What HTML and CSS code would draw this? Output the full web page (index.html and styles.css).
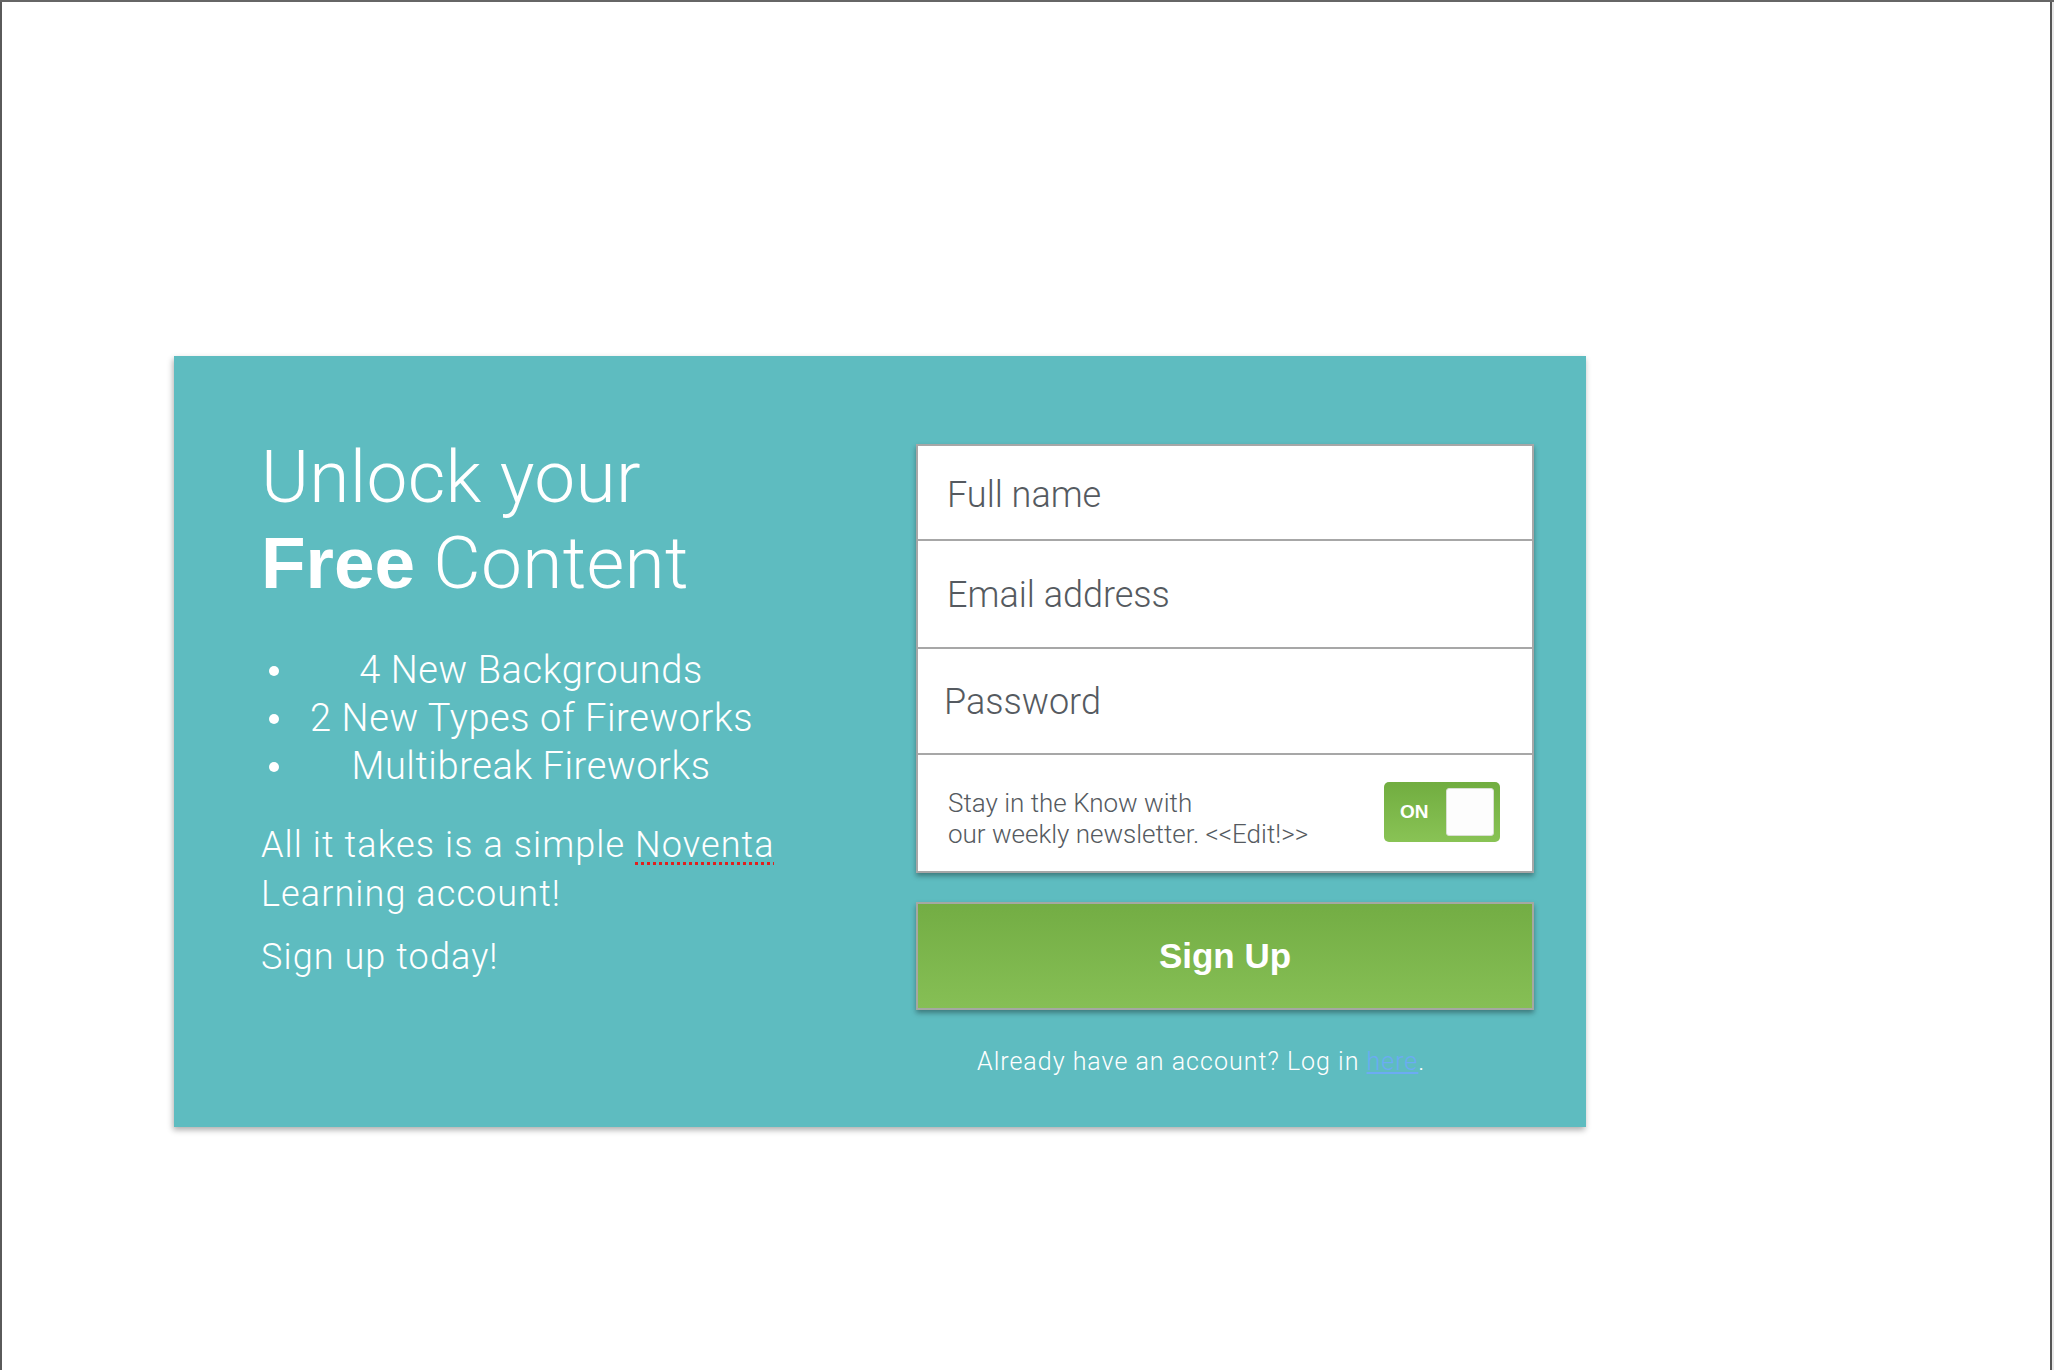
FILE: index.html
```html
<!DOCTYPE html>
<html lang="en">
<head>
<meta charset="utf-8">
<title>Unlock your Free Content</title>
<link rel="stylesheet" href="styles.css">
</head>
<body>
<div class="frame">
  <section class="card">
    <div class="pitch">
      <h1 class="pitch-title">Unlock your<br><strong>Free</strong> Content</h1>
      <ul class="perks">
        <li class="perk"><span class="perk-dot"></span><span class="perk-text">4 New Backgrounds</span></li>
        <li class="perk"><span class="perk-dot"></span><span class="perk-text">2 New Types of Fireworks</span></li>
        <li class="perk"><span class="perk-dot"></span><span class="perk-text">Multibreak Fireworks</span></li>
      </ul>
      <p class="pitch-copy">All it takes is a simple <span class="misspelled">Noventa</span> Learning account!</p>
      <p class="pitch-cta">Sign up today!</p>
    </div>
    <div class="signup">
      <div class="fields">
        <div class="field field-name">Full name</div>
        <div class="field field-email">Email address</div>
        <div class="field field-password">Password</div>
        <div class="field field-news">
          <p class="news-text">Stay in the Know with<br>our weekly newsletter. &lt;&lt;Edit!&gt;&gt;</p>
          <div class="toggle">
            <span class="toggle-label">ON</span>
            <span class="toggle-knob"></span>
          </div>
        </div>
      </div>
      <button class="signup-btn" type="button">Sign Up</button>
      <p class="login-note">Already have an account? Log in <a class="login-link" href="#">here</a>.</p>
    </div>
  </section>
</div>
</body>
</html>
```

FILE: styles.css
```css
html {
  background: #e6e6e6;
}

body {
  margin: 0;
  border-top: 2px solid #666666;
  font-family: Roboto, "Liberation Sans", Arial, sans-serif;
  font-weight: 300;
}

.frame {
  width: 2052px;
  height: 1368px;
  box-sizing: border-box;
  background: #ffffff;
  border-left: 2px solid #5a5a5a;
  border-right: 2px solid #555555;
  padding: 354px 0 0 172px;
}

.card {
  width: 1412px;
  height: 771px;
  box-sizing: border-box;
  background: #5ebcc0;
  box-shadow: -1px 3px 6px rgba(0, 0, 0, 0.32);
  display: grid;
  grid-template-columns: 1fr 618px;
  align-items: start;
  padding: 0 52px 0 87px;
  color: #ffffff;
}

/* left column */
.pitch {
  padding-top: 78px;
}

.pitch-title {
  margin: 0;
  font-size: 73px;
  line-height: 86px;
  font-weight: 300;
  letter-spacing: 0.3px;
}

.pitch-title strong {
  font-family: "Liberation Sans", Arial, sans-serif;
  font-weight: 700;
  letter-spacing: 0;
}

.perks {
  list-style: none;
  margin: 40px 0 0 0;
  padding: 0;
  font-size: 38px;
  line-height: 48px;
  letter-spacing: 0.6px;
}

.perk {
  display: grid;
  grid-template-columns: 49px 442px;
  align-items: start;
}

.perk-dot {
  width: 10px;
  height: 10px;
  margin: 20px 0 0 8px;
  border-radius: 50%;
  background: #ffffff;
}

.perk-text {
  text-align: center;
  white-space: nowrap;
}

.pitch-copy {
  margin: 31px 0 0 0;
  font-size: 36px;
  line-height: 49px;
  letter-spacing: 1.1px;
  max-width: 560px;
}

.misspelled {
  text-decoration: underline dotted #e0201e;
  text-decoration-thickness: 3px;
  text-underline-offset: 5px;
}

.pitch-cta {
  margin: 14px 0 0 0;
  font-size: 36px;
  line-height: 49px;
  letter-spacing: 1.1px;
}

/* right column */
.signup {
  padding-top: 88px;
}

.fields {
  background: #ffffff;
  border: 2px solid #a7a7a7;
  box-shadow: 0 3px 5px rgba(0, 0, 0, 0.35);
  color: #555a60;
}

.field {
  box-sizing: border-box;
  padding-left: 29px;
  font-size: 36px;
  line-height: 42px;
  border-bottom: 2px solid #a7a7a7;
}

.field-name {
  height: 95px;
  padding-top: 28px;
}

.field-email {
  height: 108px;
  padding-top: 33px;
}

.field-password {
  height: 106px;
  padding-top: 32px;
  padding-left: 26px;
}

.field-news {
  height: 116px;
  border-bottom: 0;
  display: flex;
  justify-content: space-between;
  align-items: flex-start;
  padding-left: 30px;
  padding-right: 32px;
}

.news-text {
  margin: 0;
  padding-top: 33px;
  font-size: 26px;
  line-height: 31px;
}

.toggle {
  margin-top: 27px;
  width: 116px;
  height: 60px;
  box-sizing: border-box;
  border-radius: 5px;
  background: linear-gradient(#71ad40, #89c355);
  display: flex;
  align-items: center;
  justify-content: space-between;
  padding: 0 6px 0 16px;
}

.toggle-label {
  font-family: "Liberation Sans", Arial, sans-serif;
  font-weight: 700;
  font-size: 19px;
  color: #ffffff;
}

.toggle-knob {
  width: 48px;
  height: 48px;
  box-sizing: border-box;
  background: #fdfdfd;
  border: 1px solid #d9dfd3;
  border-radius: 3px;
}

.signup-btn {
  display: block;
  width: 100%;
  height: 108px;
  margin-top: 29px;
  border: 2px solid #a5a8a2;
  background: linear-gradient(#73ad44, #86bf55);
  box-shadow: 0 3px 5px rgba(0, 0, 0, 0.35);
  color: #ffffff;
  font-family: "Liberation Sans", Arial, sans-serif;
  font-weight: 700;
  font-size: 35px;
  padding: 0;
  cursor: pointer;
}

.login-note {
  margin: 37px 0 0 0;
  padding-left: 61px;
  font-size: 25px;
  line-height: 30px;
  letter-spacing: 1px;
}

.login-link {
  color: #6cabf3;
  text-decoration: underline;
}
```
